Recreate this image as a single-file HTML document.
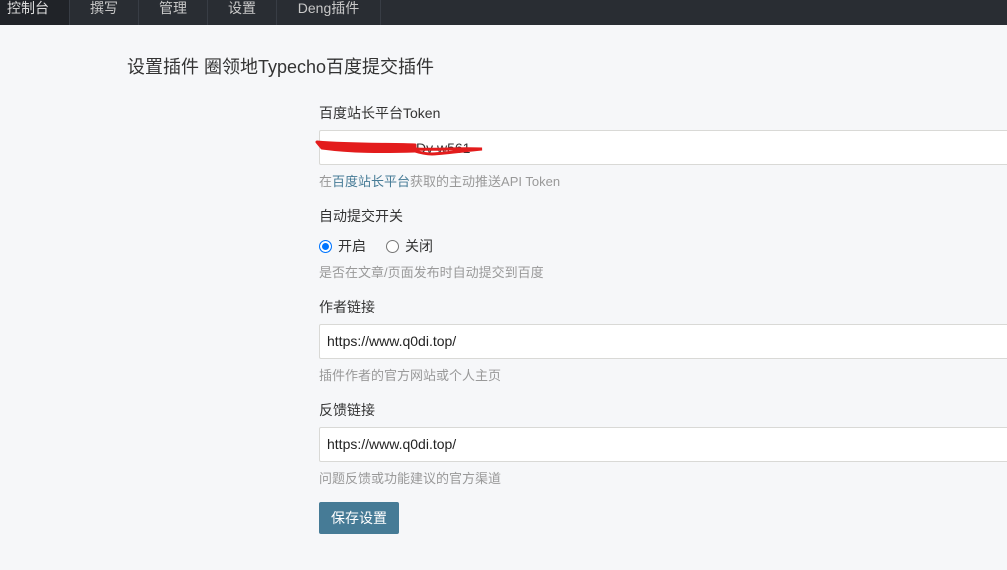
<!DOCTYPE html>
<html><head><meta charset="utf-8"><style>
*{margin:0;padding:0;box-sizing:border-box}
body{width:1007px;height:570px;overflow:hidden;background:#f6f7f9;font-family:"Liberation Sans","Noto Sans CJK SC",sans-serif;color:#444;font-size:14px;position:relative}
.nav{height:25px;background:#292d33;display:flex}
.nav a{color:#c8c8c8;font-size:14px;line-height:16px;height:25px;border-right:1px solid #383d45;display:block;text-align:center}
.nav a.on{background:#202328;color:#ddd;text-align:left;padding-left:7px}
.t{position:absolute;left:127px;top:53px;font-size:18px;color:#333;font-weight:normal}
.abs{position:absolute;left:319px}
.lbl{font-size:14px;color:#333}
.inp{position:absolute;left:319px;width:700px;height:35px;background:#fff;border:1px solid #d9d9d6;border-radius:2px;padding:0 7px;line-height:33px;color:#222;font-size:14px}
.d{font-size:13px;color:#999}
.d b{font-weight:normal;color:#467b96}
.btn{position:absolute;left:319px;top:502px;width:80px;height:32px;background:#467b96;color:#fff;border-radius:2px;text-align:center;line-height:32px;font-size:14px}
.r{display:inline-block;width:13px;height:13px;border-radius:50%;border:1px solid #767676;vertical-align:-2px;margin-right:6px;background:#fff}
.r.on{border:1px solid #0075ff;box-shadow:inset 0 0 0 2px #fff;background:#0075ff}
</style></head><body>
<div class="nav"><a class="on" style="width:70px">控制台</a><a style="width:69px">撰写</a><a style="width:69px">管理</a><a style="width:69px">设置</a><a style="width:104px">Deng插件</a></div>
<div class="t">设置插件 圈领地Typecho百度提交插件</div>
<div class="abs lbl" style="top:103px">百度站长平台Token</div>
<div class="inp" style="top:130px">&nbsp;</div>
<svg class="abs" style="top:136px;left:312px" width="175" height="24"><text x="104" y="17" font-size="14" fill="#333" font-family="Liberation Sans">Dv  w561</text><path d="M5 6 C40 9 80 8 103 9 L103 15 C70 16 40 16 10 12 Z" fill="#e31c1c" stroke="#e31c1c" stroke-width="3" stroke-linejoin="round"/><path d="M103 13 C125 14 150 12 170 13 C150 15 135 17 120 18 C112 18 106 16 103 15" fill="none" stroke="#e31c1c" stroke-width="3" stroke-linecap="round"/></svg>
<div class="abs d" style="top:171px">在<b>百度站长平台</b>获取的主动推送API Token</div>
<div class="abs lbl" style="top:206px">自动提交开关</div>
<div class="abs" style="top:236px;font-size:14px;color:#333"><span class="r on"></span>开启<span style="display:inline-block;width:20px"></span><span class="r"></span>关闭</div>
<div class="abs d" style="top:262px">是否在文章/页面发布时自动提交到百度</div>
<div class="abs lbl" style="top:297px">作者链接</div>
<div class="inp" style="top:324px">https://www.q0di.top/</div>
<div class="abs d" style="top:365px">插件作者的官方网站或个人主页</div>
<div class="abs lbl" style="top:400px">反馈链接</div>
<div class="inp" style="top:427px">https://www.q0di.top/</div>
<div class="abs d" style="top:468px">问题反馈或功能建议的官方渠道</div>
<div class="btn">保存设置</div>
</body></html>
